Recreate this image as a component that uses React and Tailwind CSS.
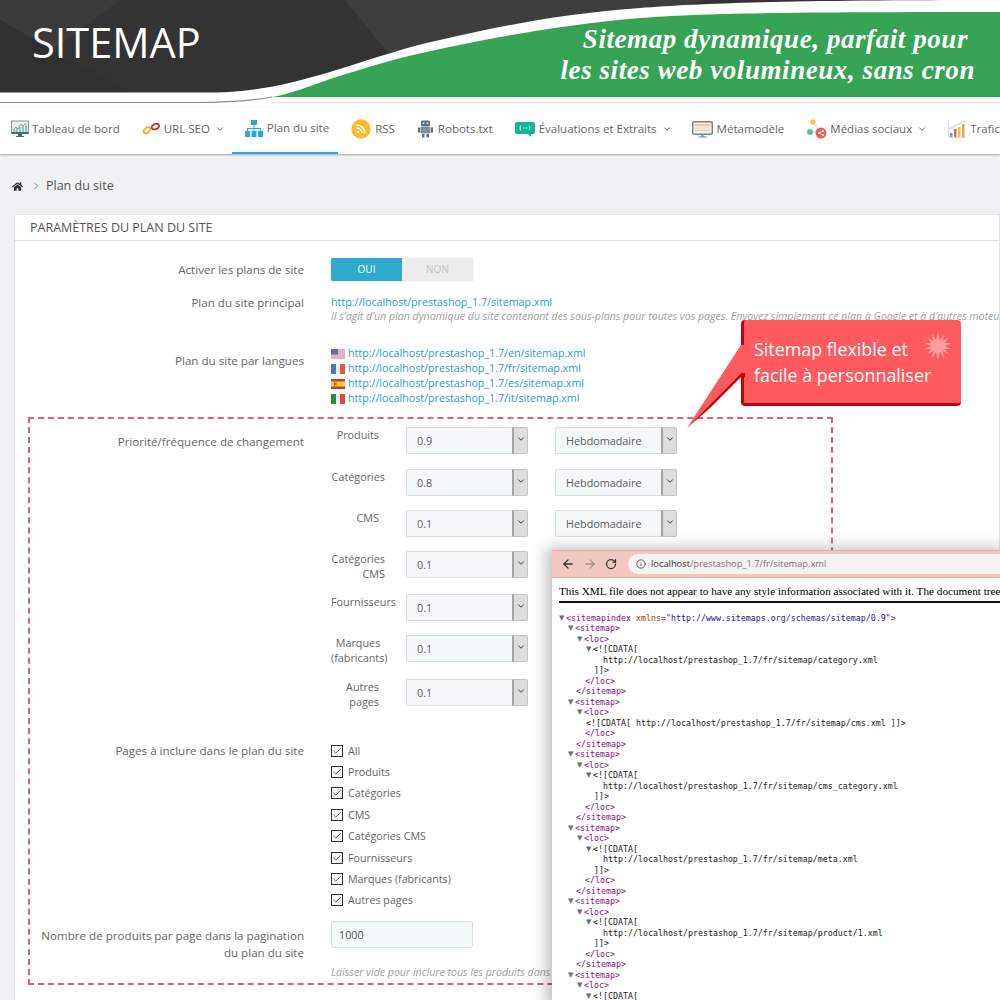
import React from "react";
import { ChevronDown, ArrowLeft, ArrowRight, RotateCw, Info, Check } from "lucide-react";
import { FaHome } from "react-icons/fa";

const Chev = () => <ChevronDown className="ml-[5px] w-[10px] h-[10px] text-[#555]" strokeWidth={2.2} />;

const IconDash = () => (
  <svg width="18" height="18" viewBox="0 0 18 18">
    <rect x="0.5" y="1" width="17" height="12" fill="#e6ecec" stroke="#8a969c" />
    <path d="M2 10l3-3 2 2 3-5 2 2 3-3" fill="none" stroke="#d9886c" strokeWidth="1" />
    <path d="M3 12V9M6 12V8M9 12V7M12 12V6M15 12V5" stroke="#58b6a6" strokeWidth="1.3" />
    <rect x="0.5" y="12" width="17" height="2" fill="#56646c" />
    <path d="M7 14h4v2H7zM5 16h8v1H5z" fill="#56646c" />
  </svg>
);
const IconLink = () => (
  <svg width="19" height="12" viewBox="0 0 19 12">
    <path d="M2 9.5c-1.5-1.5.5-3.5 2-4.5s3-1.5 4 0-.5 3.500-2 4.500-3 1-4 0z" fill="none" stroke="#f0ad2e" strokeWidth="1.800" />
    <path d="M10 5.500c-1-1.500.5-3 2-4s3.500-1 4.500 0 .5 3-1 4-4.500 1.500-5.500 0z" fill="none" stroke="#c9301f" strokeWidth="1.800" />
  </svg>
);
const IconSitemap = () => (
  <svg width="18" height="17" viewBox="0 0 18 17">
    <path d="M6 0h6v5H6zM0 11h5v6H0zM6.500 11h5v6h-5zM13 11h5v6h-5z" fill="#2aa6de" />
    <path d="M8.500 5h1v3H16v3h-1V9H9.500v2h-1V9H3v2H2V8h6.500z" fill="#2aa6de" />
  </svg>
);
const IconRss = () => (
  <svg width="20" height="20" viewBox="0 0 20 20">
    <circle cx="10" cy="10" r="9.700" fill="#fbbd2e" />
    <circle cx="7" cy="13" r="1.300" fill="#fff" />
    <path d="M5.700 9a5.300 5.300 0 0 1 5.300 5.300M5.700 6a8.300 8.300 0 0 1 8.300 8.300" fill="none" stroke="#fff" strokeWidth="1.500" />
  </svg>
);
const IconRobot = () => (
  <svg width="15" height="18" viewBox="0 0 15 18">
    <rect x="3" y="0.500" width="9" height="6" rx="1.500" fill="#5d6f7c" />
    <circle cx="5.500" cy="3.300" r="1" fill="#cfe0e8" /><circle cx="9.500" cy="3.300" r="1" fill="#cfe0e8" />
    <rect x="2.500" y="7" width="10" height="6.500" rx="1" fill="#7d8f9c" />
    <path d="M0 7.500h2v5H0zM13 7.500h2v5h-2zM4 14h2.500v3.500H4zM8.500 14H11v3.500H8.500z" fill="#5d6f7c" />
  </svg>
);
const IconEval = () => (
  <svg width="20" height="15" viewBox="0 0 20 15">
    <path d="M2 0h16a2 2 0 0 1 2 2v8a2 2 0 0 1-2 2h-2v3l-3-3H2a2 2 0 0 1-2-2V2a2 2 0 0 1 2-2z" fill="#10b596" />
    <path d="M6 3.500C4.800 5 4.800 7 6 8.500M14 3.500c1.200 1.500 1.200 3.500 0 5" fill="none" stroke="#fff" strokeWidth="1" />
    <path d="M7.800 6h.9M9.600 6h.9M11.400 6h.9" stroke="#fff" strokeWidth="1.200" />
  </svg>
);
const IconMeta = () => (
  <svg width="21" height="17" viewBox="0 0 21 17">
    <rect x="0.700" y="0.700" width="19.600" height="12.600" rx="1.500" fill="#f4eee4" stroke="#74848f" strokeWidth="1.400" />
    <path d="M2.500 3h16v2h-16z" fill="#e8c9a2" /><path d="M3 7h15M3 9.500h15" stroke="#d8ccbc" />
    <path d="M9.500 13.500h2v2h-2zM6.500 15.500h8v1h-8z" fill="#74848f" />
  </svg>
);
const IconSocial = () => (
  <svg width="20" height="20" viewBox="0 0 20 20">
    <path d="M6 3l8 10M3 13h10" stroke="#d9d9d0" strokeWidth="1" />
    <circle cx="6" cy="3" r="2.700" fill="#f8c84a" />
    <circle cx="3" cy="13" r="3" fill="#5cc09c" />
    <circle cx="14" cy="14" r="5.500" fill="#f0604f" />
    <path d="M12 14l4-2M12 14l4 2" stroke="#fff" strokeWidth="0.900" />
    <circle cx="12" cy="14" r="1" fill="#fff" /><circle cx="16" cy="12" r="1" fill="#fff" /><circle cx="16" cy="16" r="1" fill="#fff" />
  </svg>
);
const IconTraffic = () => (
  <svg width="18" height="18" viewBox="0 0 18 18">
    <path d="M0.500 0v17.500H18" fill="none" stroke="#dcdcdc" />
    <path d="M1 9L17 1" stroke="#c8c8c8" />
    <rect x="2" y="13" width="2.500" height="4" fill="#35c0b4" />
    <rect x="6" y="9" width="2.500" height="8" fill="#f0604f" />
    <rect x="10" y="7" width="2.500" height="10" fill="#f3c33e" />
    <rect x="14" y="4" width="2.500" height="13" fill="#f2a04a" />
  </svg>
);

const FlagUS = () => (
  <svg width="14" height="10" viewBox="0 0 14 10">
    <rect width="14" height="10" fill="#e9e5ea" />
    <path d="M0 1h14M0 3h14M0 5h14M0 7h14M0 9h14" stroke="#d9808a" />
    <rect width="7" height="5.500" fill="#5c6fa8" />
  </svg>
);
const Flag3 = ({ a, b, c }) => (
  <svg width="14" height="10" viewBox="0 0 14 10">
    <rect width="5" height="10" fill={a} /><rect x="5" width="4" height="10" fill={b} /><rect x="9" width="5" height="10" fill={c} />
  </svg>
);
const FlagES = () => (
  <svg width="14" height="10" viewBox="0 0 14 10">
    <rect width="14" height="10" fill="#d8362a" /><rect y="2.500" width="14" height="5" fill="#f7d038" />
    <rect x="3" y="3.500" width="2.500" height="3" fill="#b8642c" />
  </svg>
);

const Select = ({ value }) => (
  <div className="flex h-[27px] w-[122px] rounded-[2px]">
    <div className="flex-1 border border-r-0 border-[#d5e0e3] bg-[#f5f8f9] rounded-l-[2px] pl-[10px] leading-[25px] text-[10.800px] text-[#5c5c5c]">{value}</div>
    <div className="w-[16px] bg-[#dcdddd] border border-[#c2c6c6] border-l-2 border-l-[#a0a5a5] rounded-r-[2px] flex items-center justify-center pb-[3px]">
      <ChevronDown className="w-[10px] h-[10px] text-[#444]" strokeWidth={2.4} />
    </div>
  </div>
);

const priorityRows = [
  { lines: ["Produits"], cls: "pr-[6px] text-right", mt: "", sel2: true, v: "0.9" },
  { lines: ["Catégories"], cls: "text-right", mt: "mt-[15px]", sel2: true, v: "0.8" },
  { lines: ["CMS"], cls: "pr-[6px] text-right", mt: "mt-[14px]", sel2: true, v: "0.1" },
  { lines: ["Catégories", "CMS"], cls: "text-right", mt: "mt-[14px]", v: "0.1" },
  { lines: ["Fournisseurs"], cls: "", mt: "mt-[16px]", v: "0.1" },
  { lines: ["Marques", "(fabricants)"], cls: "text-center", mt: "mt-[14px]", v: "0.1" },
  { lines: ["Autres", "pages"], cls: "pr-[6px] text-right", mt: "mt-[17px]", v: "0.1" },
];

const pages = ["All", "Produits", "Catégories", "CMS", "Catégories CMS", "Fournisseurs", "Marques (fabricants)", "Autres pages"];

const navBase = "flex items-center h-full pb-[3px] text-[11.5px] text-[#666] whitespace-nowrap";

const B = "http://localhost/prestashop_1.7/fr/sitemap/";

const T = ({ c }) => <span className="text-[#881280]">{c}</span>;
const Arrow = () => <span className="text-[#6e6e6e] text-[7px] inline-block w-[7px] align-[1px] font-['DejaVu_Sans',sans-serif]">▼</span>;

const xmlLines = [
  [0, true, <><T c="<sitemapindex " /><span className="text-[#994500]">xmlns</span><T c="=&quot;" /><span className="text-[#1a1aa6]">http://www.sitemaps.org/schemas/sitemap/0.9</span><T c="&quot;>" /></>],
];
const block = (url, inline) => {
  const out = [
    [9, true, <T c="<sitemap>" />],
    [18, true, <T c="<loc>" />],
  ];
  if (inline) {
    out.push([27, false, <>{`<![CDATA[ ${url} ]]>`}</>]);
  } else {
    out.push([27, true, <>{"<![CDATA["}</>]);
    out.push([44, false, url]);
    out.push([35, false, "]]>"]);
  }
  out.push([26, false, <T c="</loc>" />]);
  out.push([17, false, <T c="</sitemap>" />]);
  return out;
};
const allLines = [
  ...xmlLines,
  ...block(B + "category.xml"),
  ...block(B + "cms.xml", true),
  ...block(B + "cms_category.xml"),
  ...block(B + "meta.xml"),
  ...block(B + "product/1.xml"),
  [9, true, <T c="<sitemap>" />],
  [18, true, <T c="<loc>" />],
  [27, true, <>{"<![CDATA["}</>],
];

const indentStyle = (n) => ({ paddingLeft: n });

export default function App() {
  return (
    <div className="relative w-[1000px] h-[1000px] overflow-hidden bg-[#eff1f2] font-['Open_Sans','Noto_Sans',sans-serif]">
      {/* banner */}
      <div className="relative h-[107px] bg-white overflow-hidden">
        <svg className="absolute inset-0" width="1000" height="107" viewBox="0 0 1000 107">
          <rect width="1000" height="94" fill="#333333" />
          <path d="M0 0h120L0 90z" fill="#3b3b3b" />
          <path d="M0 20l130 72H0z" fill="#303030" />
          <path d="M345 0h360L410 80z" fill="#3e3e3e" />
          <path d="M0 92.500H215C255 92 290 84 333 71C375 58 410 46 440 40C500 26 560 14 640 8C700 3 800 0 1000 0V107H0z" fill="#ffffff" />
          <path d="M272 97C290 94 310 86 333 78C365 68 400 57 440 49C500 36 570 24 640 18C700 13 800 12 1000 12V97z" fill="#37a354" />
          <path d="M272 102.500H1000" stroke="#e2e2e2" strokeWidth="1.500" />
          <path d="M0 102.500H195C230 102.500 255 100 272 97" fill="none" stroke="#8c8c8c" strokeWidth="1.200" />
        </svg>
        <div className="relative flex h-[97px]">
          <div className="pl-[32px] pt-[15px] text-[41.500px] leading-[55px] text-white font-['Open_Sans',sans-serif]">SITEMAP</div>
          <div className="ml-auto pr-[25px] pt-[24px] text-right text-white font-['Liberation_Serif',serif] italic font-bold text-[27px] leading-[31px] tracking-[0.570px]">
            <div className="pr-[7px]">Sitemap dynamique, parfait pour</div>
            <div>les sites web volumineux, sans cron</div>
          </div>
        </div>
      </div>

      {/* nav */}
      <div className="flex h-[47px] bg-white shadow-[0_1px_2px_rgba(0,0,0,0.3)] overflow-hidden pl-[11px] relative">
        <div className={navBase}><IconDash /><span className="ml-[3px]">Tableau de bord</span></div>
        <div className={`${navBase} ml-[22px]`}><IconLink /><span className="ml-[3px]">URL SEO</span><Chev /></div>
        <div className={`${navBase} ml-[7px] pl-[13px] pr-[9px] border-b-2 border-[#2aa6de] text-[#2aa6de]`}><IconSitemap /><span className="ml-[4px]">Plan du site</span></div>
        <div className={`${navBase} ml-[13px]`}><IconRss /><span className="ml-[4px]">RSS</span></div>
        <div className={`${navBase} ml-[23px]`}><IconRobot /><span className="ml-[5px]">Robots.txt</span></div>
        <div className={`${navBase} ml-[22px]`}><IconEval /><span className="ml-[4px]">Évaluations et Extraits</span><Chev /></div>
        <div className={`${navBase} ml-[20px]`}><IconMeta /><span className="ml-[4px]">Métamodèle</span></div>
        <div className={`${navBase} ml-[23px]`}><IconSocial /><span className="ml-[3px]">Médias sociaux</span><Chev /></div>
        <div className={`${navBase} ml-[21px]`}><IconTraffic /><span className="ml-[4px]">Trafic</span></div>
      </div>

      {/* breadcrumb */}
      <div className="flex items-center h-[60px] pl-[12px] pt-[4px] text-[12.500px]">
        <FaHome className="w-[11px] h-[11px] text-[#333]" />
        <ChevronDown className="ml-[7px] w-[12px] h-[12px] -rotate-90 text-[#666]" strokeWidth={1.500} />
        <span className="ml-[4px] text-[#555]">Plan du site</span>
      </div>

      {/* panel */}
      <div className="ml-[14px] h-[800px] bg-white border border-[#e3e5e6] rounded-tl-[3px]">
        <div className="h-[26px] border-b border-[#e0e0e0] pl-[15px] leading-[25px] text-[12.500px] text-[#555] uppercase">Paramètres du plan du site</div>

        <div className="flex mt-[17px] h-[23px]">
          <div className="w-[289px] shrink-0 text-right text-[11.600px] text-[#666] leading-[23px]">Activer les plans de site</div>
          <div className="ml-[27px] flex w-[142px] h-[23px] rounded-[2px] overflow-hidden text-[10px] leading-[23px] text-center shadow-[0_0_1px_rgba(0,0,0,0.3)]">
            <div className="w-[71px] bg-[#2eaace] text-white">OUI</div>
            <div className="w-[71px] bg-[#ececec] text-[#c4c4c4]">NON</div>
          </div>
        </div>

        <div className="flex mt-[14px]">
          <div className="w-[289px] shrink-0 text-right text-[11.600px] text-[#666] leading-[15px]">Plan du site principal</div>
          <div className="ml-[27px] min-w-0 whitespace-nowrap">
            <div className="text-[10.700px] leading-[15px] text-[#25a0d8]">http://localhost/prestashop_1.7/sitemap.xml</div>
            <div className="text-[10.600px] leading-[13px] italic text-[#a0a0a0]">Il s’agit d’un plan dynamique du site contenant des sous-plans pour toutes vos pages. Envoyez simplement ce plan à Google et à d’autres moteurs</div>
          </div>
        </div>

        <div className="flex mt-[23px]">
          <div className="w-[289px] shrink-0 pt-[7px] text-right text-[11.600px] text-[#666] leading-[15px]">Plan du site par langues</div>
          <div className="ml-[27px] text-[10.700px] leading-[15px] text-[#25a0d8]">
            <div className="flex items-center gap-[3px]"><FlagUS />http://localhost/prestashop_1.7/en/sitemap.xml</div>
            <div className="flex items-center gap-[3px]"><Flag3 a="#5474b8" b="#eef0f4" c="#e0584c" />http://localhost/prestashop_1.7/fr/sitemap.xml</div>
            <div className="flex items-center gap-[3px]"><FlagES />http://localhost/prestashop_1.7/es/sitemap.xml</div>
            <div className="flex items-center gap-[3px]"><Flag3 a="#2e8a3e" b="#eef0f4" c="#dc4a40" />http://localhost/prestashop_1.7/it/sitemap.xml</div>
          </div>
        </div>

        {/* dashed box */}
        <div className="mt-[11px] ml-[13px] w-[805px] h-[568px] border-2 border-dashed border-[#e0636b]">
          <div className="flex pt-[8px]">
            <div className="w-[274px] pt-[7px] text-right text-[11.600px] text-[#666] leading-[15px]">Priorité/fréquence de changement</div>
            <div className="ml-[27px]">
              {priorityRows.map((r, i) => (
                <div key={i} className={`flex h-[27px] ${r.mt}`}>
                  <div className={`w-[54px] whitespace-nowrap text-[10.800px] leading-[15px] text-[#666] ${r.cls}`}>
                    {r.lines.map((l) => <div key={l}>{l}</div>)}
                  </div>
                  <div className="ml-[21px]"><Select value={r.v} /></div>
                  {r.sel2 && <div className="ml-[27px]"><Select value="Hebdomadaire" /></div>}
                </div>
              ))}
            </div>
          </div>

          <div className="flex mt-[34px]">
            <div className="w-[274px] pt-[3px] text-right text-[11.600px] text-[#666] leading-[15px]">Pages à inclure dans le plan du site</div>
            <div className="ml-[27px]">
              {pages.map((p) => (
                <div key={p} className="flex items-center h-[21.400px] text-[10.700px] text-[#666]">
                  <span className="flex items-center justify-center w-[12px] h-[12px] border border-[#333] bg-white">
                    <Check className="w-[10px] h-[10px] text-[#333]" strokeWidth={2} />
                  </span>
                  <span className="ml-[5px]">{p}</span>
                </div>
              ))}
            </div>
          </div>

          <div className="flex mt-[9.500px]">
            <div className="w-[274px] pt-[6px] text-right text-[11.600px] text-[#666] leading-[17px]">
              Nombre de produits par page dans la pagination<br />du plan du site
            </div>
            <div className="ml-[27px]">
              <div className="w-[142px] h-[27px] rounded-[2px] border border-[#d5e0e3] bg-[#f5f8f9] pl-[7px] leading-[25px] text-[10.800px] text-[#555]">1000</div>
              <div className="mt-[18px] whitespace-nowrap text-[10.600px] leading-[13px] italic text-[#a0a0a0]">Laisser vide pour inclure tous les produits dans</div>
            </div>
          </div>
        </div>
      </div>

      {/* callout */}
      <div className="absolute left-[741px] top-[320px] w-[220px] h-[86px] rounded-[4px] bg-[#ff5a5f] border-l-[3px] border-b-[3px] border-[#c4000c] pl-[10px] pt-[16px] text-white text-[17.900px] leading-[26px]">
        <div>Sitemap flexible et</div>
        <div>facile à personnaliser</div>
        <svg className="absolute left-[180px] top-[12px]" width="28" height="28" viewBox="-14 -14 28 28">
          <path d="M0-14L2-6 6-12.500 5-5 11-9 7-3 14-3 7 0 14 3 7 3 11 9 5 5 6 12.500 2 6 0 14-2 6-6 12.500-5 5-11 9-7 3-14 3-7 0-14-3-7-3-11-9-5-5-6-12.500-2-6z" fill="#ff9c9c" />
        </svg>
      </div>
      <svg className="absolute left-[680px] top-[340px]" width="66" height="92" viewBox="0 0 66 92">
        <path d="M7 88L61 5H65V33H61z" fill="#ff5a5f" />
        <path d="M7 88L61 33H65V37H61L30 68z" fill="#c4000c" />
      </svg>

      {/* browser */}
      <div className="absolute left-[552px] top-[550px] w-[460px] h-[460px] bg-white shadow-[-6px_-2px_14px_rgba(0,0,0,0.25)]">
        <div className="flex items-center h-[28px] bg-[#f1c7c1] border-t border-[#e3aaa2] border-b border-b-[#e6b5ae] pl-[9px] text-[#333]">
          <ArrowLeft className="w-[14px] h-[14px]" strokeWidth={2.200} />
          <ArrowRight className="ml-[8px] w-[14px] h-[14px] text-[#a88f8b]" strokeWidth={2.200} />
          <RotateCw className="ml-[8px] w-[12px] h-[12px]" strokeWidth={2.500} />
          <div className="ml-[11px] flex items-center flex-1 h-[20px] rounded-l-[10px] bg-[#f6f2f1] pl-[8px] text-[9.300px] text-[#777] whitespace-nowrap">
            <Info className="w-[10px] h-[10px] text-[#444]" strokeWidth={2} />
            <span className="ml-[5px]"><span className="text-[#333]">localhost</span>/prestashop_1.7/fr/sitemap.xml</span>
          </div>
        </div>
        <div className="mx-[7px] h-[25px] border-b-2 border-[#111] pt-[6px] font-['Liberation_Serif',serif] text-[11.200px] leading-[14px] text-black whitespace-nowrap overflow-hidden">
          This XML file does not appear to have any style information associated with it. The document tree is shown below.
        </div>
        <div className="pt-[9.500px] pl-[7px] font-['DejaVu_Sans_Mono',monospace] text-[8.300px] leading-[10.500px] text-[#222] whitespace-nowrap">
          {allLines.map(([n, arrow, c], i) => (
            <div key={i} className="h-[10.500px]" style={indentStyle(n)}>
              {arrow && <Arrow />}{c}
            </div>
          ))}
        </div>
      </div>
    </div>
  );
}
